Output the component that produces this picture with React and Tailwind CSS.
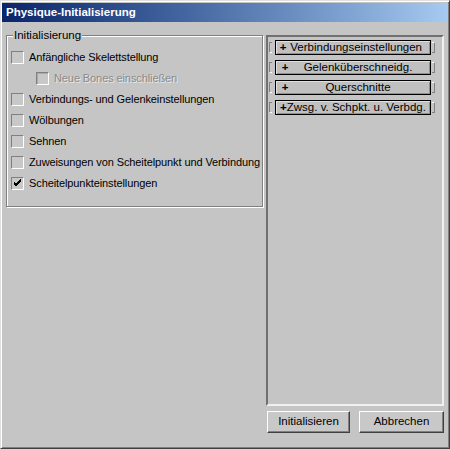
import React from 'react';

const font = { fontFamily: '"Liberation Sans", Arial, sans-serif' };

function CheckBox({ checked, disabled }) {
  return (
    <span className="relative w-[13px] h-[13px] shrink-0 border-t border-l border-t-[#808080] border-l-[#808080] border-b border-r border-b-white border-r-white bg-[#c8c8c8]">
      {checked && (
        <svg className="absolute left-[1px] top-[1px]" width="9" height="9" viewBox="0 0 9 9">
          <path d="M1 4 L3 6 L8 1 M1 5 L3 7 L8 2 M1 3 L3 5 L8 0" stroke="#000" strokeWidth="1" fill="none" />
        </svg>
      )}
      {disabled && <span className="absolute inset-0 border-t border-l border-[#a8a8a8] border-b-0 border-r-0" />}
    </span>
  );
}

function Option({ label, checked, disabled, indent }) {
  return (
    <div className={`flex items-center h-[21px] gap-[5px] whitespace-nowrap ${indent ? 'pl-[29px]' : 'pl-[4px]'}`}>
      <CheckBox checked={checked} disabled={disabled} />
      <span
        className={`text-[11px] tracking-[-0.1px] leading-none ${disabled ? 'text-[#8a8a8a] [text-shadow:1px_1px_0_#e8e8e8]' : 'text-black'}`}
      >
        {label}
      </span>
    </div>
  );
}

function Rollout({ title, tight }) {
  return (
    <div className="flex items-center h-[15px] mb-[5px] pl-[1px]">
      <span className="w-[3px] h-[11px] border border-r-0 border-t-[#808080] border-l-[#808080] border-b-white" />
      <div className="flex items-center w-[156px] h-[15px] ml-[3px] border border-black bg-[#c0c0c0] shadow-[inset_1px_1px_0_#e0e0e0,inset_-1px_-1px_0_#909090] text-[11.5px] leading-none whitespace-nowrap">
        {tight ? (
          <span className="w-full text-center"><b>+</b>Zwsg. v. Schpkt. u. Verbdg.</span>
        ) : (
          <>
            <span className="w-[18px] text-center font-bold">+</span>
            <span className="flex-1 text-center pr-[8px]">{title}</span>
          </>
        )}
      </div>
      <span className="w-[3px] h-[11px] ml-[1px] border border-l-0 border-t-white border-r-[#808080] border-b-[#808080]" />
    </div>
  );
}

function Button({ children, w }) {
  return (
    <button className={`${w} h-[22px] text-[11.5px] text-black bg-[#c8c8c8] border border-t-white border-l-white border-b-[#404040] border-r-[#404040] shadow-[inset_-1px_-1px_0_#808080]`}>
      {children}
    </button>
  );
}

export default function App() {
  return (
    <div style={font} className="w-[450px] h-[449px] flex flex-col bg-[#c5c5c5] border border-t-[#e0e0e0] border-l-[#e0e0e0] border-b-[#404040] border-r-[#404040] shadow-[inset_1px_1px_0_#fff,inset_-1px_-1px_0_#808080]">
      <div className="mx-[1px] mt-[2px] h-[19px] flex items-center pl-[4px] bg-gradient-to-r from-[#0a246a] to-[#a6caf0]">
        <span className="text-white font-bold text-[11.5px] leading-none">Physique-Initialisierung</span>
      </div>

      <div className="flex pl-[5px] pt-[13px]">
        <div className="relative w-[257px] h-[172px] border border-[#808080] shadow-[inset_1px_1px_0_#fff,1px_1px_0_#fff] pt-[11px]">
          <span className="absolute left-[6px] -top-[8px] px-[1px] bg-[#c5c5c5] text-[11.5px] leading-[15px]">Initialisierung</span>
          <Option label="Anfängliche Skelettstellung" />
          <Option label="Neue Bones einschließen" indent disabled />
          <Option label="Verbindungs- und Gelenkeinstellungen" />
          <Option label="Wölbungen" />
          <Option label="Sehnen" />
          <Option label="Zuweisungen von Scheitelpunkt und Verbindung" />
          <Option label="Scheitelpunkteinstellungen" checked />
        </div>

        <div className="flex flex-col ml-[3px]">
          <div className="w-[178px] h-[371px] border-2 border-t-[#707070] border-l-[#707070] border-b-[#f0f0f0] border-r-[#f0f0f0] pt-[3px]">
            <Rollout title="Verbindungseinstellungen" />
            <Rollout title="Gelenküberschneidg." />
            <Rollout title="Querschnitte" />
            <Rollout tight />
          </div>
          <div className="flex gap-[9px] mt-[5px] pl-[1px]">
            <Button w="w-[83px]">Initialisieren</Button>
            <Button w="w-[85px]">Abbrechen</Button>
          </div>
        </div>
      </div>
    </div>
  );
}
